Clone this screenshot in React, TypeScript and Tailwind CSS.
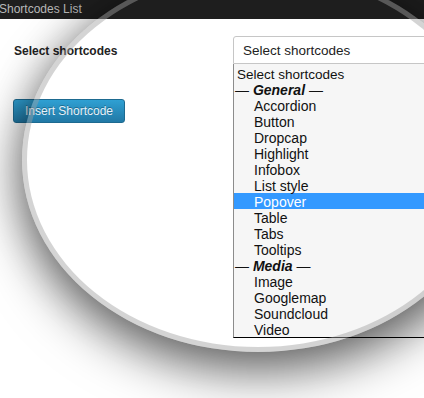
const options: { label: string; kind: 'first' | 'group' | 'item'; selected?: boolean }[] = [
  { label: 'Select shortcodes', kind: 'first' },
  { label: 'General', kind: 'group' },
  { label: 'Accordion', kind: 'item' },
  { label: 'Button', kind: 'item' },
  { label: 'Dropcap', kind: 'item' },
  { label: 'Highlight', kind: 'item' },
  { label: 'Infobox', kind: 'item' },
  { label: 'List style', kind: 'item' },
  { label: 'Popover', kind: 'item', selected: true },
  { label: 'Table', kind: 'item' },
  { label: 'Tabs', kind: 'item' },
  { label: 'Tooltips', kind: 'item' },
  { label: 'Media', kind: 'group' },
  { label: 'Image', kind: 'item' },
  { label: 'Googlemap', kind: 'item' },
  { label: 'Soundcloud', kind: 'item' },
  { label: 'Video', kind: 'item' },
];

export default function App() {
  return (
    <div
      className="relative w-[424px] h-[398px] overflow-hidden bg-white"
      style={{ fontFamily: '"Liberation Sans", Arial, sans-serif' }}
    >
      {/* title bar */}
      <div className="h-[19px] bg-[#1e1e1e] text-[#b8b8b8] text-[12px] leading-[19px] -ml-px">
        Shortcodes List
      </div>

      <div className="flex pt-[17px]">
        <div className="w-[233px] shrink-0 pl-[13px]">
          <div className="mt-[7px] ml-px text-[12px] leading-[16px] font-bold text-[#222]">
            Select shortcodes
          </div>
          <button className="mt-[40px] w-[112px] h-[24px] rounded-[3px] border border-[#1d6a90] bg-gradient-to-b from-[#2fa0d3] to-[#2179a6] text-[12px] text-[#e6f1f8] [text-shadow:0_-1px_0_rgba(0,0,0,0.3)]">
            Insert Shortcode
          </button>
        </div>

        <div className="w-[210px] shrink-0">
          <div className="h-[28px] flex items-center pl-[9px] pt-[3px] border border-[#c6c6c6] rounded-tl-[3px] bg-white text-[13.5px] text-[#222]">
            Select shortcodes
          </div>
          <div className="pt-px border-l border-l-[#8c8c8c] border-b border-b-black bg-[#f6f6f6] text-[14px] text-[#111]">
            {options.map((o) => {
              if (o.kind === 'group') {
                return (
                  <div key={o.label} className="h-[16px] leading-[19px] pl-px whitespace-nowrap">
                    — <span className="font-bold italic">{o.label}</span> —
                  </div>
                );
              }
              return (
                <div
                  key={o.label}
                  className={
                    'h-[16px] leading-[19px] whitespace-nowrap ' +
                    (o.kind === 'first' ? 'pl-[3px] text-[13.5px] ' : 'pl-[20px] ') +
                    (o.selected ? 'bg-[#3399ff] text-white' : '')
                  }
                >
                  {o.label}
                </div>
              );
            })}
          </div>
        </div>
      </div>

      {/* magnifier lens */}
      <div className="pointer-events-none absolute left-[22px] top-[-32px] w-[472px] h-[384px] rounded-[50%] border-[5px] border-[rgba(160,160,160,0.45)] shadow-[0_22px_50px_rgba(0,0,0,0.5),0_0_40px_rgba(0,0,0,0.3)]" />
    </div>
  );
}
